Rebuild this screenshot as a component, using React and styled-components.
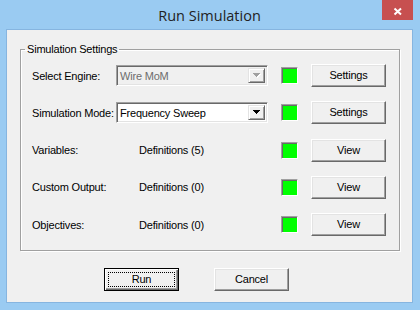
import React from "react";
import styled, { createGlobalStyle } from "styled-components";

const Global = createGlobalStyle`
  html, body { margin: 0; padding: 0; background: #9acbf2; }
  * { box-sizing: border-box; }
`;

const Window = styled.div`
  width: 420px;
  height: 310px;
  background: #9acbf2;
  display: flex;
  flex-direction: column;
  padding: 0 7px 7px 6px;
  font-family: "Liberation Sans", Arial, sans-serif;
  font-size: 11px;
  letter-spacing: -0.2px;
  color: #000;
`;

const TitleBar = styled.div`
  height: 29px;
  flex: none;
  display: grid;
  grid-template-columns: 1fr auto 1fr;
  align-items: center;
`;

const Title = styled.div`
  grid-column: 2;
  font-family: "Open Sans", "Noto Sans", sans-serif;
  font-size: 14.5px;
  letter-spacing: 0;
  color: #222;
  line-height: 29px;
  padding-top: 1px;
`;

const CloseButton = styled.div`
  grid-column: 3;
  justify-self: end;
  align-self: start;
  width: 31px;
  height: 20px;
  background: #c75050;
  display: flex;
`;

const Client = styled.div`
  flex: 1;
  background: #f0f0f0;
  border: 1px solid #86b5e0;
  display: flex;
  flex-direction: column;
`;

const Group = styled.fieldset`
  margin: 13px 12px 0 13px;
  padding: 8px 13px 14px 11px;
  border: 1px solid #a0a0a0;
  box-shadow: 1px 1px 0 #fff, inset 1px 1px 0 #fff;
  min-width: 0;
`;

const Legend = styled.legend`
  padding: 0 2px;
  margin-left: -7px;
  line-height: 13px;
  font-size: 11px;
`;

const Grid = styled.div`
  display: grid;
  grid-template-columns: 71px 152px 17px 75px;
  grid-auto-rows: 23px;
  column-gap: 13px;
  row-gap: 14.25px;
  align-items: center;
`;

const Label = styled.div`
  white-space: nowrap;
`;

const Value = styled.div`
  white-space: nowrap;
  padding-left: 23px;
`;

const Combo = styled.div`
  height: 21px;
  display: flex;
  align-items: stretch;
  padding: 2px;
  border: 1px solid;
  border-color: #a0a0a0 #fff #fff #a0a0a0;
  box-shadow: inset 1px 1px 0 #696969, inset -1px -1px 0 #e3e3e3;
  background: ${(p) => (p.disabled ? "#f0f0f0" : "#fff")};
  color: ${(p) => (p.disabled ? "#6d6d6d" : "#000")};
`;

const ComboText = styled.div`
  flex: 1;
  padding-left: 1px;
  display: flex;
  align-items: center;
  white-space: nowrap;
  overflow: hidden;
`;

const DropButton = styled.div`
  width: 17px;
  flex: none;
  background: #f0f0f0;
  border: 1px solid;
  border-color: #e3e3e3 #696969 #696969 #e3e3e3;
  box-shadow: inset 1px 1px 0 #fff, inset -1px -1px 0 #a0a0a0;
  display: flex;
  align-items: center;
  justify-content: center;
`;

const Status = styled.div`
  width: 17px;
  height: 17px;
  background: #00ff00;
  border: 1px solid;
  border-color: #a0a0a0 #fff #fff #a0a0a0;
  box-shadow: inset 1px 1px 0 #696969;
`;

const Button = styled.button`
  font: inherit;
  letter-spacing: inherit;
  color: #000;
  width: 75px;
  height: 23px;
  margin: 0;
  padding: 0 0 1px;
  background: #f0f0f0;
  border: 1px solid;
  border-color: #fff #696969 #696969 #fff;
  box-shadow: inset -1px -1px 0 #a0a0a0, inset 1px 1px 0 #e3e3e3;
  display: flex;
  align-items: center;
  justify-content: center;
  cursor: default;
`;

const DefaultButton = styled(Button)`
  border: 1px solid #000;
  box-shadow: inset 1px 1px 0 #fff, inset -1px -1px 0 #696969,
    inset -2px -2px 0 #a0a0a0;
  padding: 3px;
`;

const FocusRing = styled.span`
  flex: 1;
  align-self: stretch;
  border: 1px dotted #000;
  display: flex;
  align-items: center;
  justify-content: center;
  padding-bottom: 1px;
`;

const Footer = styled.div`
  display: flex;
  gap: 35px;
  padding-left: 97px;
  margin-top: 17px;
`;

const Arrow = ({ disabled }) => (
  <svg width="8" height="5" viewBox="0 0 8 5" style={{ display: "block" }}>
    {disabled && (
      <path d="M1 1h7v1h-1v1h-1v1h-1v1h-1v-1h-1v-1h-1v-1h-1z" fill="#fff" />
    )}
    <path
      d="M0 0h7v1h-1v1h-1v1h-1v1h-1v-1h-1v-1h-1v-1h-1z"
      fill={disabled ? "#a0a0a0" : "#000"}
    />
  </svg>
);

const CloseIcon = () => (
  <svg width="31" height="20" viewBox="0 0 31 20">
    <path
      d="M12.5 8.5 L19 14.5 M19 8.5 L12.5 14.5"
      stroke="#fff"
      strokeWidth="2"
      fill="none"
    />
  </svg>
);

const rows = [
  { label: "Variables:", value: "Definitions (5)" },
  { label: "Custom Output:", value: "Definitions (0)" },
  { label: "Objectives:", value: "Definitions (0)" },
];

export default function App() {
  return (
    <>
      <Global />
      <Window>
        <TitleBar>
          <Title>Run Simulation</Title>
          <CloseButton>
            <CloseIcon />
          </CloseButton>
        </TitleBar>
        <Client>
          <Group>
            <Legend>Simulation Settings</Legend>
            <Grid>
              <Label>Select Engine:</Label>
              <Combo disabled>
                <ComboText>Wire MoM</ComboText>
                <DropButton>
                  <Arrow disabled />
                </DropButton>
              </Combo>
              <Status />
              <Button>Settings</Button>

              <Label>Simulation Mode:</Label>
              <Combo>
                <ComboText>Frequency Sweep</ComboText>
                <DropButton>
                  <Arrow />
                </DropButton>
              </Combo>
              <Status />
              <Button>Settings</Button>

              {rows.map((r) => (
                <React.Fragment key={r.label}>
                  <Label>{r.label}</Label>
                  <Value>{r.value}</Value>
                  <Status />
                  <Button>View</Button>
                </React.Fragment>
              ))}
            </Grid>
          </Group>
          <Footer>
            <DefaultButton>
              <FocusRing>Run</FocusRing>
            </DefaultButton>
            <Button>Cancel</Button>
          </Footer>
        </Client>
      </Window>
    </>
  );
}
